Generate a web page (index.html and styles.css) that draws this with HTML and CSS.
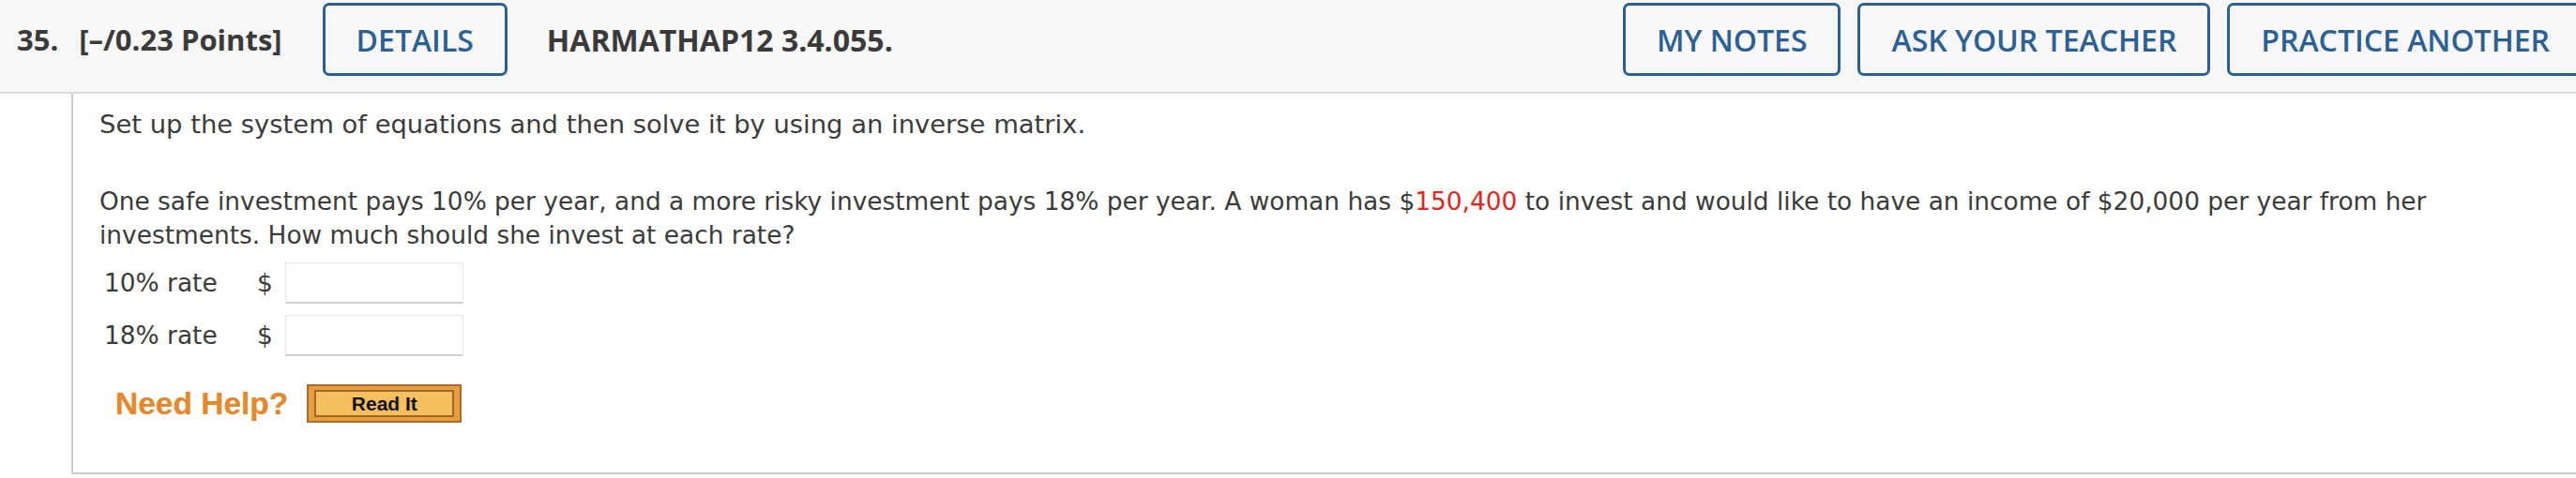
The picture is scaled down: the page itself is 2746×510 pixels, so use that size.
FILE: index.html
```html
<!DOCTYPE html>
<html lang="en">
<head>
<meta charset="utf-8">
<title>Question 35</title>
<link rel="stylesheet" href="styles.css">
</head>
<body>
<div class="page">
  <header class="qhead">
    <span class="qnum">35.</span>
    <span class="qpoints">[–/0.23 Points]</span>
    <button class="qbtn qbtn-details">DETAILS</button>
    <span class="qref">HARMATHAP12 3.4.055.</span>
    <div class="qactions">
      <button class="qbtn">MY NOTES</button>
      <button class="qbtn">ASK YOUR TEACHER</button>
      <button class="qbtn">PRACTICE ANOTHER</button>
    </div>
  </header>
  <section class="qbody">
    <p class="intro">Set up the system of equations and then solve it by using an inverse matrix.</p>
    <p class="problem">One safe investment pays 10% per year, and a more risky investment pays 18% per year. A woman has $<span class="param">150,400</span> to invest and would like to have an income of $20,000 per year from her investments. How much should she invest at each rate?</p>
    <div class="answers">
      <div class="arow">
        <span class="alabel">10% rate</span>
        <span class="acur">$</span>
        <input class="ainput" type="text">
      </div>
      <div class="arow">
        <span class="alabel">18% rate</span>
        <span class="acur">$</span>
        <input class="ainput" type="text">
      </div>
    </div>
    <div class="help">
      <span class="help-text">Need Help?</span>
      <span class="readit"><span class="readit-inner">Read It</span></span>
    </div>
  </section>
</div>
</body>
</html>
```

FILE: styles.css
```css
html, body {
  margin: 0;
  padding: 0;
  background: #ffffff;
}

body {
  overflow: hidden;
}

.page {
  width: 2754px;
}

.qhead {
  display: flex;
  align-items: center;
  background: #f7f7f7;
  border-bottom: 2px solid #dddddd;
  padding: 3px 0 17px 18px;
  font-family: "Open Sans", "Liberation Sans", sans-serif;
  color: #3a3a3a;
}

.qnum {
  font-size: 31px;
  font-weight: 700;
}

.qpoints {
  font-size: 31px;
  font-weight: 700;
  margin-left: 22px;
}

.qref {
  font-size: 32px;
  font-weight: 700;
  margin-left: 42px;
}

.qbtn {
  box-sizing: border-box;
  height: 78px;
  padding: 0 33px;
  border: 3px solid #2c6093;
  border-radius: 7px;
  background: #f7f7f7;
  color: #2c6093;
  font-family: "Open Sans", "Liberation Sans", sans-serif;
  font-size: 32px;
  font-weight: 600;
}

.qbtn-details {
  margin-left: 43px;
}

.qactions {
  display: flex;
  gap: 18px;
  margin-left: auto;
}

.qbody {
  margin-left: 76px;
  border-left: 2px solid #cccccc;
  border-bottom: 2px solid #cccccc;
  padding: 15px 0 0 28px;
  height: 389px;
  font-family: Verdana, "DejaVu Sans", sans-serif;
  font-size: 26.4px;
  line-height: 36px;
  color: #3b3b3b;
}

.intro {
  margin: 0 0 46px 0;
  font-size: 27.4px;
}

.problem {
  margin: 0;
  max-width: 2530px;
}

.param {
  color: #e3261c;
}

.answers {
  display: flex;
  flex-direction: column;
  gap: 12px;
  margin-top: 11px;
  padding-left: 5px;
}

.arow {
  display: flex;
  align-items: center;
}

.alabel {
  width: 163px;
}

.acur {
  width: 30px;
}

.ainput {
  box-sizing: border-box;
  width: 190px;
  height: 44px;
  border: 1px solid #e6e6e6;
  border-bottom: 2px solid #d2d2d2;
  background: #ffffff;
  margin: 0;
}

.help {
  display: flex;
  align-items: center;
  margin-top: 30px;
  padding-left: 17px;
}

.help-text {
  font-family: "Liberation Sans", Arial, sans-serif;
  font-weight: 700;
  font-size: 33.5px;
  color: #e38a30;
  text-shadow: 0 0 1px rgba(227, 138, 48, 0.6);
  margin-right: 20px;
}

.readit {
  box-sizing: border-box;
  display: flex;
  width: 165px;
  height: 41px;
  padding: 4px 6px;
  background: #e99c3c;
  border: 2px solid #a86c2c;
}

.readit-inner {
  flex: 1;
  display: flex;
  align-items: center;
  justify-content: center;
  background: #f4bf5c;
  border: 2px solid #9a6a2c;
  font-family: "Liberation Sans", Arial, sans-serif;
  font-weight: 700;
  font-size: 21px;
  color: #111111;
}
```
